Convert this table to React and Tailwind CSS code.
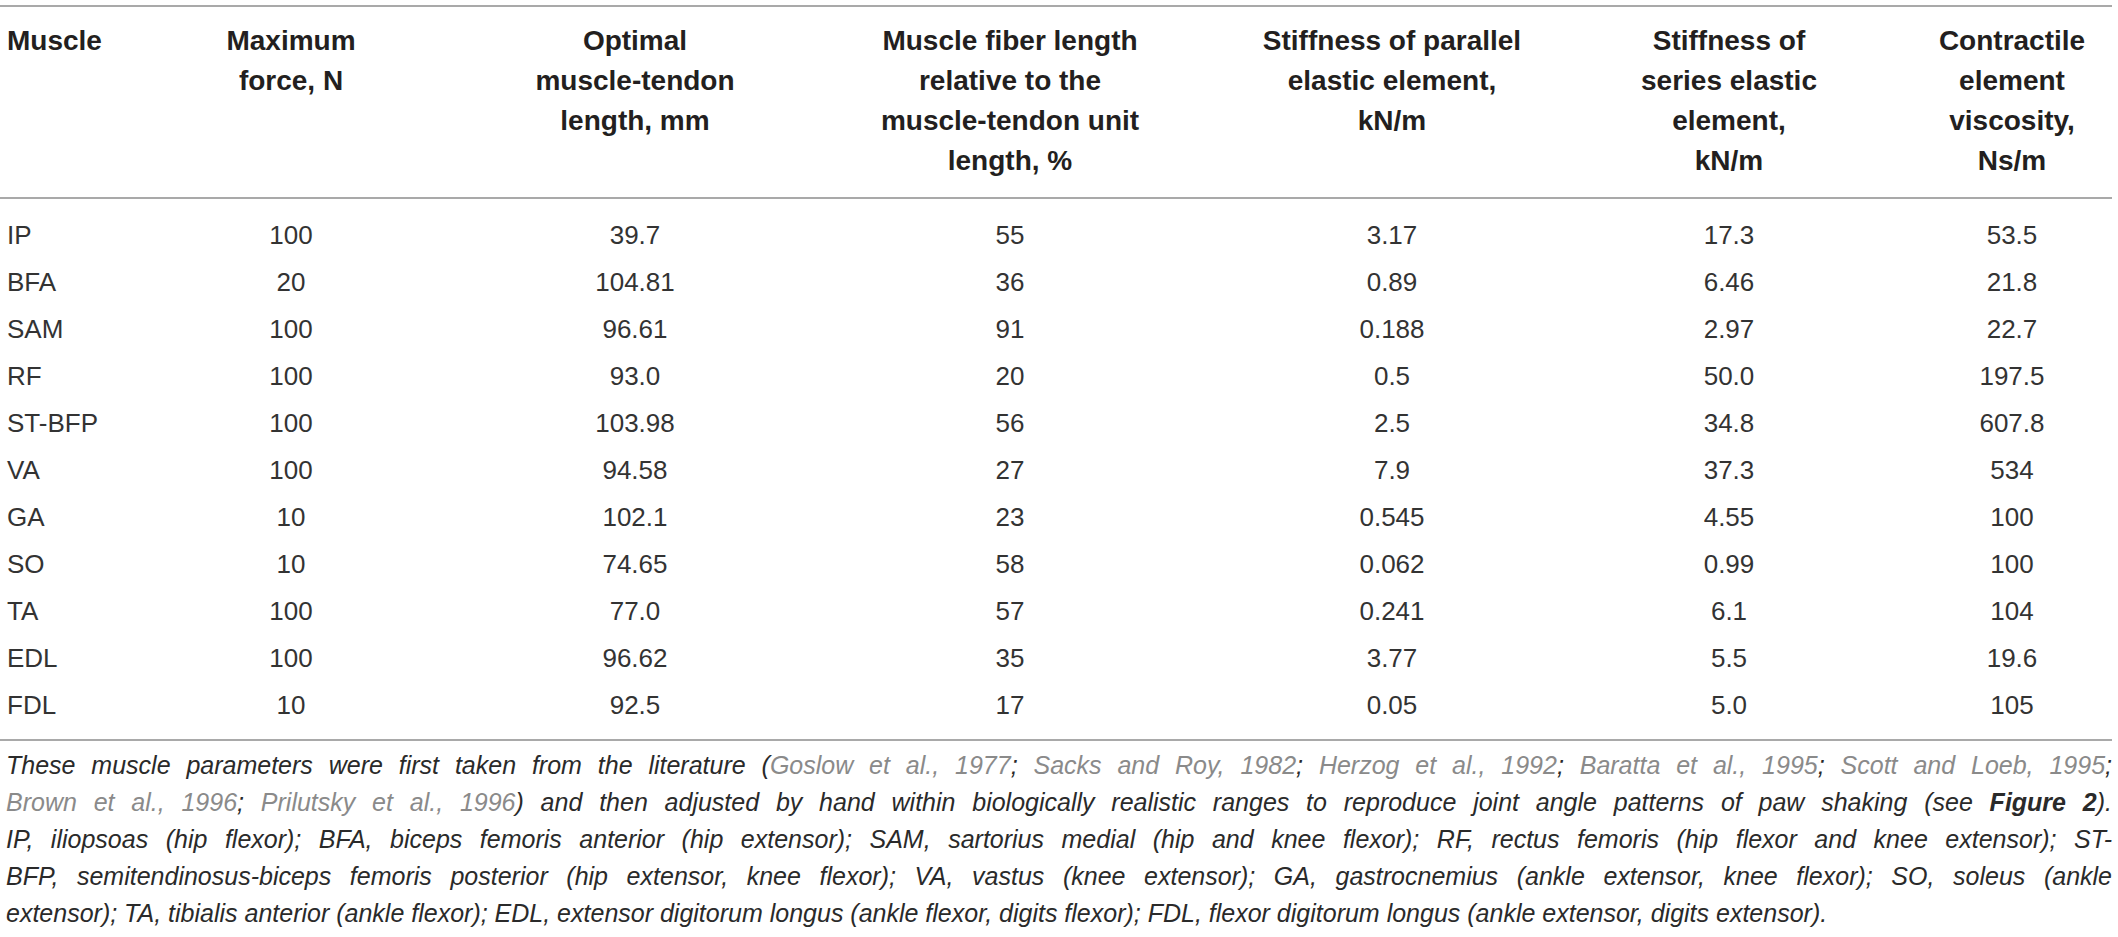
import React from "react";

const rows = [
  ["IP", "100", "39.7", "55", "3.17", "17.3", "53.5"],
  ["BFA", "20", "104.81", "36", "0.89", "6.46", "21.8"],
  ["SAM", "100", "96.61", "91", "0.188", "2.97", "22.7"],
  ["RF", "100", "93.0", "20", "0.5", "50.0", "197.5"],
  ["ST-BFP", "100", "103.98", "56", "2.5", "34.8", "607.8"],
  ["VA", "100", "94.58", "27", "7.9", "37.3", "534"],
  ["GA", "10", "102.1", "23", "0.545", "4.55", "100"],
  ["SO", "10", "74.65", "58", "0.062", "0.99", "100"],
  ["TA", "100", "77.0", "57", "0.241", "6.1", "104"],
  ["EDL", "100", "96.62", "35", "3.77", "5.5", "19.6"],
  ["FDL", "10", "92.5", "17", "0.05", "5.0", "105"],
];

const headers = [
  ["Muscle"],
  ["Maximum", "force, N"],
  ["Optimal", "muscle-tendon", "length, mm"],
  ["Muscle fiber length", "relative to the", "muscle-tendon unit", "length, %"],
  ["Stiffness of parallel", "elastic element,", "kN/m"],
  ["Stiffness of", "series elastic", "element,", "kN/m"],
  ["Contractile", "element", "viscosity,", "Ns/m"],
];

const grid = "grid grid-cols-[94px_394px_294px_456px_308px_366px_200px]";

function Ref({ children }) {
  return <span className="text-[#8a8a8a]">{children}</span>;
}

function Rule() {
  return <div className="h-[2px] w-[2112px] bg-[#a9a9a9]" />;
}

export default function App() {
  return (
    <div className="w-[2118px] h-[937px] bg-white overflow-hidden pt-[5px] text-[#231f20]" style={{ fontFamily: '"Liberation Sans", Arial, sans-serif' }}>
      <Rule />
      <div className={grid + " pt-[14px] pb-[16px] text-[28px] leading-[40px] font-bold"}>
        {headers.map((h, i) => (
          <div key={i} className={i === 0 ? "pl-[7px] whitespace-nowrap" : "text-center whitespace-nowrap"}>
            {h.map((line, j) => (
              <div key={j}>{line}</div>
            ))}
          </div>
        ))}
      </div>
      <Rule />
      <div className="pt-[13px] pb-[10px] text-[26px] leading-[47px] text-[#333]">
        {rows.map((r) => (
          <div key={r[0]} className={grid}>
            {r.map((c, i) => (
              <div key={i} className={i === 0 ? "pl-[7px] whitespace-nowrap" : "text-center"}>
                {c}
              </div>
            ))}
          </div>
        ))}
      </div>
      <Rule />
      <div className="mt-[6px] w-[2112px] pl-[6px] italic text-[25px] leading-[37px] text-[#2a2a2a]">
        <div className="text-justify [text-align-last:justify]">
          These muscle parameters were first taken from the literature (<Ref>Goslow et al., 1977</Ref>; <Ref>Sacks and Roy, 1982</Ref>; <Ref>Herzog et al., 1992</Ref>; <Ref>Baratta et al., 1995</Ref>; <Ref>Scott and Loeb, 1995</Ref>;
        </div>
        <div className="text-justify [text-align-last:justify]">
          <Ref>Brown et al., 1996</Ref>; <Ref>Prilutsky et al., 1996</Ref>) and then adjusted by hand within biologically realistic ranges to reproduce joint angle patterns of paw shaking (see <span className="font-bold">Figure 2</span>).
        </div>
        <div className="text-justify [text-align-last:justify]">
          IP, iliopsoas (hip flexor); BFA, biceps femoris anterior (hip extensor); SAM, sartorius medial (hip and knee flexor); RF, rectus femoris (hip flexor and knee extensor); ST-
        </div>
        <div className="text-justify [text-align-last:justify]">
          BFP, semitendinosus-biceps femoris posterior (hip extensor, knee flexor); VA, vastus (knee extensor); GA, gastrocnemius (ankle extensor, knee flexor); SO, soleus (ankle
        </div>
        <div>
          extensor); TA, tibialis anterior (ankle flexor); EDL, extensor digitorum longus (ankle flexor, digits flexor); FDL, flexor digitorum longus (ankle extensor, digits extensor).
        </div>
      </div>
    </div>
  );
}
